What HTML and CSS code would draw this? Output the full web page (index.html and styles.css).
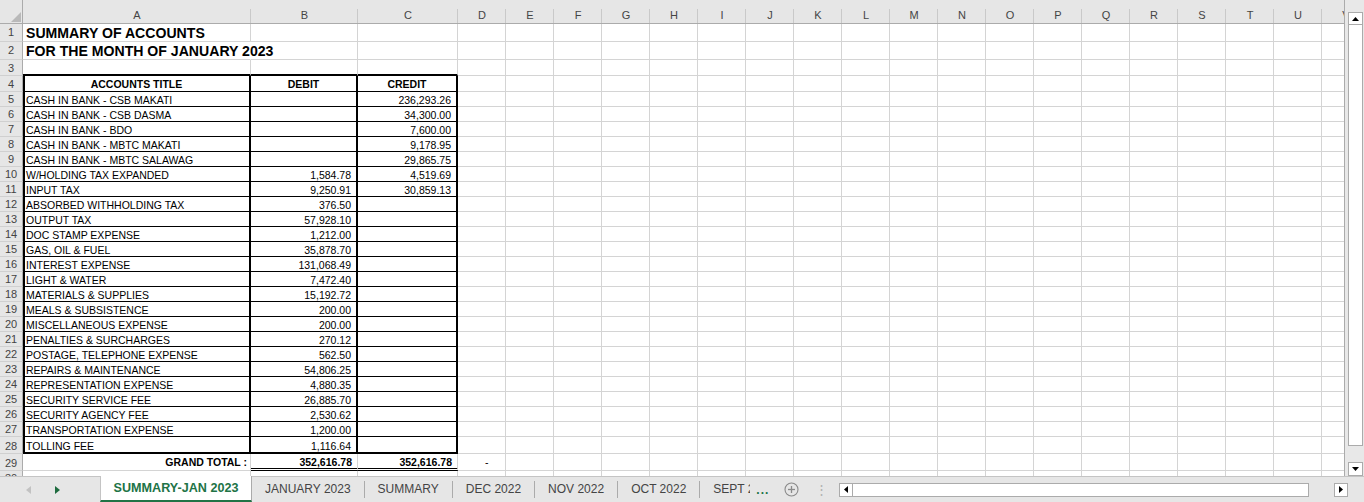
FILE: index.html
```html
<!DOCTYPE html>
<html>
<head>
<meta charset="utf-8">
<title>SUMMARY-JAN 2023</title>
<link rel="stylesheet" href="styles.css">
</head>
<body>
<div class="app">
  <div class="main">
    <div class="sheet">
      <div class="colhead">
        <div class="corner"><svg width="10" height="10" viewBox="0 0 10 10"><polygon points="10,0 10,10 0,10" fill="#b9b9b9"/></svg></div>
        <div class="hc a">A</div><div class="hc b">B</div><div class="hc cc">C</div>
        <div class="hc">D</div><div class="hc">E</div><div class="hc">F</div><div class="hc">G</div><div class="hc">H</div><div class="hc">I</div><div class="hc">J</div><div class="hc">K</div><div class="hc">L</div><div class="hc">M</div><div class="hc">N</div><div class="hc">O</div><div class="hc">P</div><div class="hc">Q</div><div class="hc">R</div><div class="hc">S</div><div class="hc">T</div><div class="hc">U</div><div class="hc">V</div>
      </div>

      <div class="row h18"><div class="rh">1</div><div class="c a title">SUMMARY OF ACCOUNTS</div><div class="c b"></div><div class="c cc"></div><div class="rest"></div></div>
      <div class="row h18"><div class="rh">2</div><div class="c a title over">FOR THE MONTH OF JANUARY 2023</div><div class="c b"></div><div class="c cc"></div><div class="rest"></div></div>
      <div class="row h16"><div class="rh">3</div><div class="c a topb"></div><div class="c b topb"></div><div class="c cc topb"></div><div class="rest"></div></div>
      <div class="row h16"><div class="rh">4</div><div class="c a t hd">ACCOUNTS TITLE</div><div class="c b t hd">DEBIT</div><div class="c cc t hd">CREDIT</div><div class="rest"></div></div>
      <div class="row h15"><div class="rh">5</div><div class="c a t">CASH IN BANK - CSB MAKATI</div><div class="c b t num"></div><div class="c cc t num">236,293.26</div><div class="rest"></div></div>
      <div class="row h15"><div class="rh">6</div><div class="c a t">CASH IN BANK - CSB DASMA</div><div class="c b t num"></div><div class="c cc t num">34,300.00</div><div class="rest"></div></div>
      <div class="row h15"><div class="rh">7</div><div class="c a t">CASH IN BANK - BDO</div><div class="c b t num"></div><div class="c cc t num">7,600.00</div><div class="rest"></div></div>
      <div class="row h15"><div class="rh">8</div><div class="c a t">CASH IN BANK - MBTC MAKATI</div><div class="c b t num"></div><div class="c cc t num">9,178.95</div><div class="rest"></div></div>
      <div class="row h15"><div class="rh">9</div><div class="c a t">CASH IN BANK - MBTC SALAWAG</div><div class="c b t num"></div><div class="c cc t num">29,865.75</div><div class="rest"></div></div>
      <div class="row h15"><div class="rh">10</div><div class="c a t">W/HOLDING TAX EXPANDED</div><div class="c b t num">1,584.78</div><div class="c cc t num">4,519.69</div><div class="rest"></div></div>
      <div class="row h15"><div class="rh">11</div><div class="c a t">INPUT TAX</div><div class="c b t num">9,250.91</div><div class="c cc t num">30,859.13</div><div class="rest"></div></div>
      <div class="row h15"><div class="rh">12</div><div class="c a t">ABSORBED WITHHOLDING TAX</div><div class="c b t num">376.50</div><div class="c cc t num"></div><div class="rest"></div></div>
      <div class="row h15"><div class="rh">13</div><div class="c a t">OUTPUT TAX</div><div class="c b t num">57,928.10</div><div class="c cc t num"></div><div class="rest"></div></div>
      <div class="row h15"><div class="rh">14</div><div class="c a t">DOC STAMP EXPENSE</div><div class="c b t num">1,212.00</div><div class="c cc t num"></div><div class="rest"></div></div>
      <div class="row h15"><div class="rh">15</div><div class="c a t">GAS, OIL &amp; FUEL</div><div class="c b t num">35,878.70</div><div class="c cc t num"></div><div class="rest"></div></div>
      <div class="row h15"><div class="rh">16</div><div class="c a t">INTEREST EXPENSE</div><div class="c b t num">131,068.49</div><div class="c cc t num"></div><div class="rest"></div></div>
      <div class="row h15"><div class="rh">17</div><div class="c a t">LIGHT &amp; WATER</div><div class="c b t num">7,472.40</div><div class="c cc t num"></div><div class="rest"></div></div>
      <div class="row h15"><div class="rh">18</div><div class="c a t">MATERIALS &amp; SUPPLIES</div><div class="c b t num">15,192.72</div><div class="c cc t num"></div><div class="rest"></div></div>
      <div class="row h15"><div class="rh">19</div><div class="c a t">MEALS &amp; SUBSISTENCE</div><div class="c b t num">200.00</div><div class="c cc t num"></div><div class="rest"></div></div>
      <div class="row h15"><div class="rh">20</div><div class="c a t">MISCELLANEOUS EXPENSE</div><div class="c b t num">200.00</div><div class="c cc t num"></div><div class="rest"></div></div>
      <div class="row h15"><div class="rh">21</div><div class="c a t">PENALTIES &amp; SURCHARGES</div><div class="c b t num">270.12</div><div class="c cc t num"></div><div class="rest"></div></div>
      <div class="row h15"><div class="rh">22</div><div class="c a t">POSTAGE, TELEPHONE EXPENSE</div><div class="c b t num">562.50</div><div class="c cc t num"></div><div class="rest"></div></div>
      <div class="row h15"><div class="rh">23</div><div class="c a t">REPAIRS &amp; MAINTENANCE</div><div class="c b t num">54,806.25</div><div class="c cc t num"></div><div class="rest"></div></div>
      <div class="row h15"><div class="rh">24</div><div class="c a t">REPRESENTATION EXPENSE</div><div class="c b t num">4,880.35</div><div class="c cc t num"></div><div class="rest"></div></div>
      <div class="row h15"><div class="rh">25</div><div class="c a t">SECURITY SERVICE FEE</div><div class="c b t num">26,885.70</div><div class="c cc t num"></div><div class="rest"></div></div>
      <div class="row h15"><div class="rh">26</div><div class="c a t">SECURITY AGENCY FEE</div><div class="c b t num">2,530.62</div><div class="c cc t num"></div><div class="rest"></div></div>
      <div class="row h15"><div class="rh">27</div><div class="c a t">TRANSPORTATION EXPENSE</div><div class="c b t num">1,200.00</div><div class="c cc t num"></div><div class="rest"></div></div>
      <div class="row h17"><div class="rh">28</div><div class="c a t last">TOLLING FEE</div><div class="c b t num last">1,116.64</div><div class="c cc t num last"></div><div class="rest"></div></div>
      <div class="row h17"><div class="rh">29</div><div class="c a total">GRAND TOTAL :</div><div class="c b num dbl">352,616.78</div><div class="c cc num dbl">352,616.78</div><div class="rest"><span class="dash">-</span></div></div>
      <div class="row h15"><div class="rh">30</div><div class="c a"></div><div class="c b"></div><div class="c cc"></div><div class="rest"></div></div>
    </div>

    <div class="vscroll">
      <div class="vbtn up"><svg width="7" height="4" viewBox="0 0 7 4"><polygon points="0,4 7,4 3.5,0" fill="#000"/></svg></div>
      <div class="vthumb"></div>
      <div class="vgap"></div>
      <div class="vbtn down"><svg width="7" height="4" viewBox="0 0 7 4"><polygon points="0,0 7,0 3.5,4" fill="#000"/></svg></div>
    </div>
  </div>

  <div class="tabbar">
    <div class="nav">
      <svg class="navl" width="5" height="8" viewBox="0 0 5 8"><polygon points="5,0 5,8 0,4" fill="#c2c2c2"/></svg>
      <svg class="navr" width="5" height="8" viewBox="0 0 5 8"><polygon points="0,0 0,8 5,4" fill="#1e6b3f"/></svg>
    </div>
    <div class="tab active">SUMMARY-JAN 2023</div>
    <div class="tab">JANUARY 2023</div><span class="sep"></span>
    <div class="tab">SUMMARY</div><span class="sep"></span>
    <div class="tab">DEC 2022</div><span class="sep"></span>
    <div class="tab">NOV 2022</div><span class="sep"></span>
    <div class="tab">OCT 2022</div><span class="sep"></span>
    <div class="tab cut"><span class="cuttext">SEPT 2022</span></div>
    <div class="more">...</div>
    <div class="add"><svg width="15" height="15" viewBox="0 0 15 15"><circle cx="7.5" cy="7.5" r="6.5" fill="none" stroke="#8a8a8a" stroke-width="1.1"/><line x1="7.5" y1="4" x2="7.5" y2="11" stroke="#8a8a8a" stroke-width="1.3"/><line x1="4" y1="7.5" x2="11" y2="7.5" stroke="#8a8a8a" stroke-width="1.3"/></svg></div>
    <div class="vdots">⋮</div>
    <div class="hscroll">
      <div class="hbtn"><svg width="4" height="7" viewBox="0 0 4 7"><polygon points="4,0 4,7 0,3.5" fill="#000"/></svg></div>
      <div class="hthumb"></div>
      <div class="htrack"></div>
      <div class="hbtn"><svg width="4" height="7" viewBox="0 0 4 7"><polygon points="0,0 0,7 4,3.5" fill="#000"/></svg></div>
    </div>
  </div>
</div>
</body>
</html>
```

FILE: styles.css
```css
html, body {
  margin: 0;
  padding: 0;
}
body {
  width: 1364px;
  height: 502px;
  overflow: hidden;
  background: #fff;
  font-family: "Liberation Sans", Arial, sans-serif;
  color: #000;
}
.app {
  display: flex;
  flex-direction: column;
  height: 502px;
}
.main {
  display: flex;
  height: 476px;
  overflow: hidden;
}
.sheet {
  width: 1345px;
  flex-shrink: 0;
  border-right: 1px solid #ababab;
  box-sizing: border-box;
  overflow: hidden;
}

/* column header */
.colhead {
  display: flex;
  height: 24px;
  background: #e6e6e6;
  border-bottom: 1px solid #ababab;
  box-sizing: border-box;
}
.corner {
  width: 23px;
  flex-shrink: 0;
  box-sizing: border-box;
  border-right: 1px solid #ababab;
  display: flex;
  align-items: flex-end;
  justify-content: flex-end;
  padding: 0 1px 1px 0;
}
.hc {
  width: 48px;
  flex-shrink: 0;
  box-sizing: border-box;
  display: flex;
  align-items: flex-end;
  justify-content: center;
  padding-bottom: 2px;
  font-size: 11px;
  line-height: 12px;
  color: #444;
  background: linear-gradient(#c9c9c9, #c9c9c9) right bottom / 1px 14px no-repeat;
}
.hc.a { width: 228px; }
.hc.b { width: 107px; }
.hc.cc { width: 100px; }

/* rows */
.row {
  display: flex;
}
.h18 { height: 18px; }
.h17 { height: 17px; }
.h16 { height: 16px; }
.h15 { height: 15px; }

.rh {
  width: 23px;
  flex-shrink: 0;
  box-sizing: border-box;
  background: #e6e6e6;
  border-right: 1px solid #ababab;
  border-bottom: 1px solid #d0d0d0;
  color: #444;
  font-size: 11px;
  line-height: 12px;
  display: flex;
  align-items: flex-end;
  justify-content: center;
  padding-bottom: 1px;
}
.h18 .rh { padding-bottom: 3px; }

.c {
  flex-shrink: 0;
  box-sizing: border-box;
  border-right: 1px solid #d4d4d4;
  border-bottom: 1px solid #d4d4d4;
  white-space: nowrap;
  font-size: 10.5px;
  line-height: 12px;
  display: flex;
  align-items: flex-end;
  padding: 0 2px 0 2px;
}
.c.a { width: 228px; }
.c.b { width: 107px; }
.c.cc { width: 100px; }

.rest {
  width: 886px;
  flex-shrink: 0;
  box-sizing: border-box;
  border-bottom: 1px solid #d4d4d4;
  background: repeating-linear-gradient(to right, transparent 0 47px, #d4d4d4 47px 48px);
  display: flex;
  align-items: flex-end;
  font-size: 10.5px;
  line-height: 12px;
}

.title {
  font-size: 14.1px;
  font-weight: bold;
  line-height: 16px;
  position: relative;
  z-index: 1;
  padding-left: 3px;
}
.title.over { border-right-color: transparent; }

.topb { border-bottom: 2px solid #000; }

.c.t {
  border-bottom-color: #000;
  border-right: 2px solid #000;
}
.c.a.t {
  border-left: 2px solid #000;
  padding-left: 1px;
}
.c.t.last { border-bottom-width: 2px; }

.hd {
  font-weight: bold;
  justify-content: center;
  padding-bottom: 1px;
}
.num {
  justify-content: flex-end;
  padding-right: 5px;
}
.c.cc.t.num { padding-right: 5px; }

.total {
  font-weight: bold;
  justify-content: flex-end;
  padding-right: 3px;
  padding-bottom: 2px;
}
.dbl {
  font-weight: bold;
  border-bottom: 3px double #000;
}
.dash {
  padding-left: 27px;
  padding-bottom: 2px;
}

/* vertical scrollbar */
.vscroll {
  width: 19px;
  flex-shrink: 0;
  background: #e8e8e8;
  display: flex;
  flex-direction: column;
  padding: 12px 1px 0 3px;
  box-sizing: border-box;
}
.vbtn {
  box-sizing: border-box;
  border: 1px solid #ababab;
  background: #fff;
  display: flex;
  align-items: center;
  justify-content: center;
}
.vbtn.up { height: 13px; }
.vbtn.down { height: 14px; }
.vthumb {
  height: 421px;
  box-sizing: border-box;
  border: 1px solid #ababab;
  border-top: none;
  background: #fff;
}
.vgap { height: 16px; }

/* sheet tabs */
.tabbar {
  height: 26px;
  display: flex;
  align-items: stretch;
  background: #e6e6e6;
  border-top: 1px solid #c4c4c4;
  box-sizing: border-box;
  font-size: 12px;
  color: #444;
}
.nav {
  width: 100px;
  flex-shrink: 0;
  display: flex;
  align-items: center;
  padding-left: 26px;
  box-sizing: border-box;
}
.navl { margin-right: 24px; }
.tab {
  display: flex;
  align-items: center;
  padding: 0 13px 1px 13px;
  white-space: nowrap;
  flex-shrink: 0;
}
.tab.active {
  width: 152px;
  box-sizing: border-box;
  justify-content: center;
  margin-top: -1px;
  background: #fff;
  border-left: 1px solid #c4c4c4;
  border-right: 1px solid #ababab;
  border-bottom: 2px solid #217346;
  color: #217346;
  font-weight: bold;
  font-size: 12.6px;
  padding: 0;
}
.tab.wide { padding: 0 14px 1px 14px; }
.sep {
  width: 1px;
  height: 17px;
  align-self: center;
  background: #ababab;
  flex-shrink: 0;
}
.tab.cut { padding: 0 0 1px 13px; }
.cuttext {
  width: 37px;
  overflow: hidden;
  display: block;
}
.more {
  display: flex;
  align-items: center;
  padding: 0 8px 0 6px;
  color: #217346;
  font-weight: bold;
  font-size: 12px;
  letter-spacing: 1px;
}
.add {
  display: flex;
  align-items: center;
  margin-left: 7px;
}
.vdots {
  display: flex;
  align-items: center;
  margin-left: 16px;
  color: #b0b0b0;
  font-size: 13px;
}
.hscroll {
  display: flex;
  align-self: center;
  height: 14px;
  margin-left: 11px;
}
.hbtn {
  width: 14px;
  height: 14px;
  box-sizing: border-box;
  border: 1px solid #ababab;
  background: #fff;
  display: flex;
  align-items: center;
  justify-content: center;
}
.hthumb {
  width: 456px;
  height: 14px;
  box-sizing: border-box;
  border: 1px solid #ababab;
  border-left: none;
  background: #fff;
}
.htrack {
  width: 25px;
}
```
